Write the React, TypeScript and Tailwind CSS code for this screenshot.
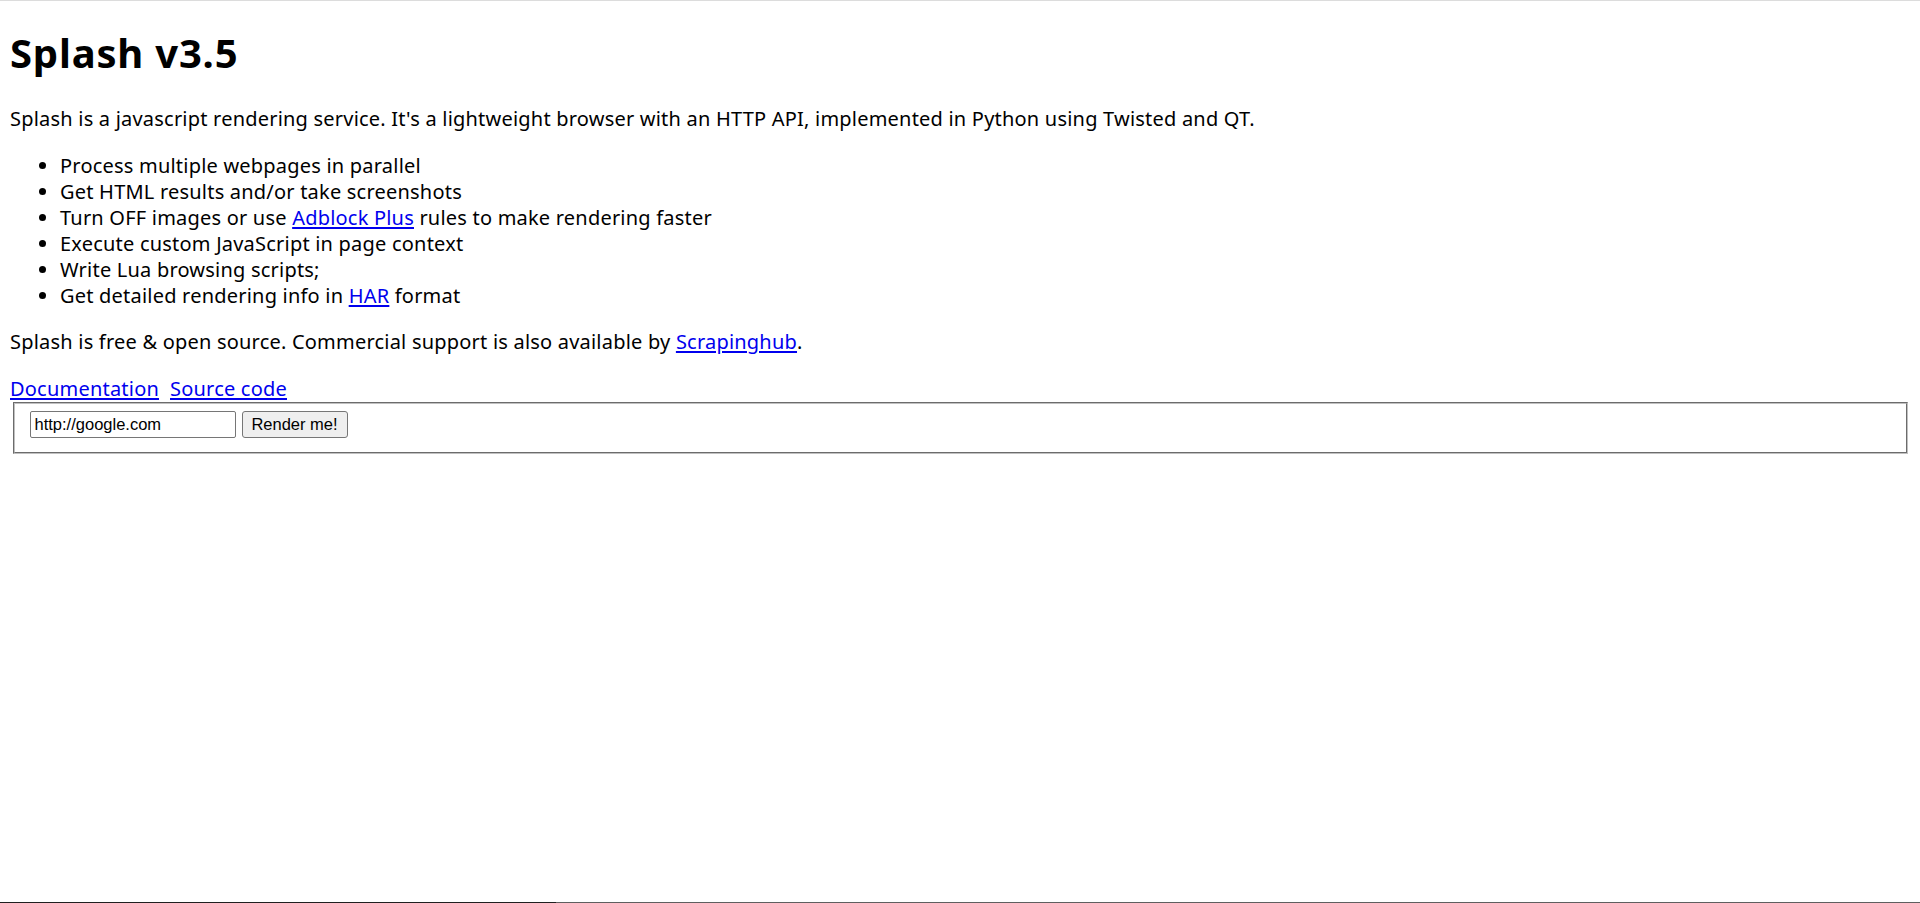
import React from "react";

function A({ children }: { children: React.ReactNode }) {
  return (
    <a href="#" className="text-[#0000ee] underline underline-offset-[2px]">
      {children}
    </a>
  );
}

export default function App() {
  return (
    <div className="flex flex-col h-[903px] bg-white text-black [font-family:'Noto_Sans',sans-serif]">
      <div className="h-px bg-[#dcdcdc] shrink-0" />
      <div className="flex-1 px-[10px]">
        <h1 className="mt-[25px] mb-[26px] text-[40px] leading-[54px] font-bold tracking-[0.8px]">
          Splash v3.5
        </h1>
        <p className="text-[20px] leading-[26px] tracking-[0.21px] mb-[20.5px]">
          Splash is a javascript rendering service. It's a lightweight browser with an HTTP API, implemented in Python using Twisted and QT.
        </p>
        <ul className="list-disc pl-[50px] text-[20px] leading-[26px] tracking-[0.21px] mb-[20.5px]">
          <li>Process multiple webpages in parallel</li>
          <li>Get HTML results and/or take screenshots</li>
          <li>
            Turn OFF images or use <A>Adblock Plus</A> rules to make rendering faster
          </li>
          <li>Execute custom JavaScript in page context</li>
          <li>Write Lua browsing scripts;</li>
          <li>
            Get detailed rendering info in <A>HAR</A> format
          </li>
        </ul>
        <p className="text-[20px] leading-[26px] tracking-[0.21px] mb-[20.5px]">
          Splash is free &amp; open source. Commercial support is also available by <A>Scrapinghub</A>.
        </p>
        <div className="flex gap-[11px] text-[20px] leading-[26px] tracking-[0.21px]">
          <A>Documentation</A>
          <A>Source code</A>
        </div>
        <div className="mx-[2.5px] border-2 [border-style:groove] border-[#c0c0c0] pt-[7.5px] pb-[13.5px] px-[15px] flex items-center gap-[6px] [font-family:'Liberation_Sans',Arial,sans-serif] text-[16.5px]">
          <input
            type="text"
            defaultValue="http://google.com"
            className="h-[27px] w-[206px] border border-[#767676] rounded-[2px] px-[4px] text-black bg-white outline-none"
          />
          <button
            type="button"
            className="h-[27px] w-[106px] border border-[#767676] rounded-[3px] bg-[#efefef] text-black"
          >
            Render me!
          </button>
        </div>
      </div>
      <div className="h-px shrink-0 flex">
        <div className="w-[556px] bg-[#202020]" />
        <div className="flex-1 bg-[#5f5f5f]" />
      </div>
    </div>
  );
}
